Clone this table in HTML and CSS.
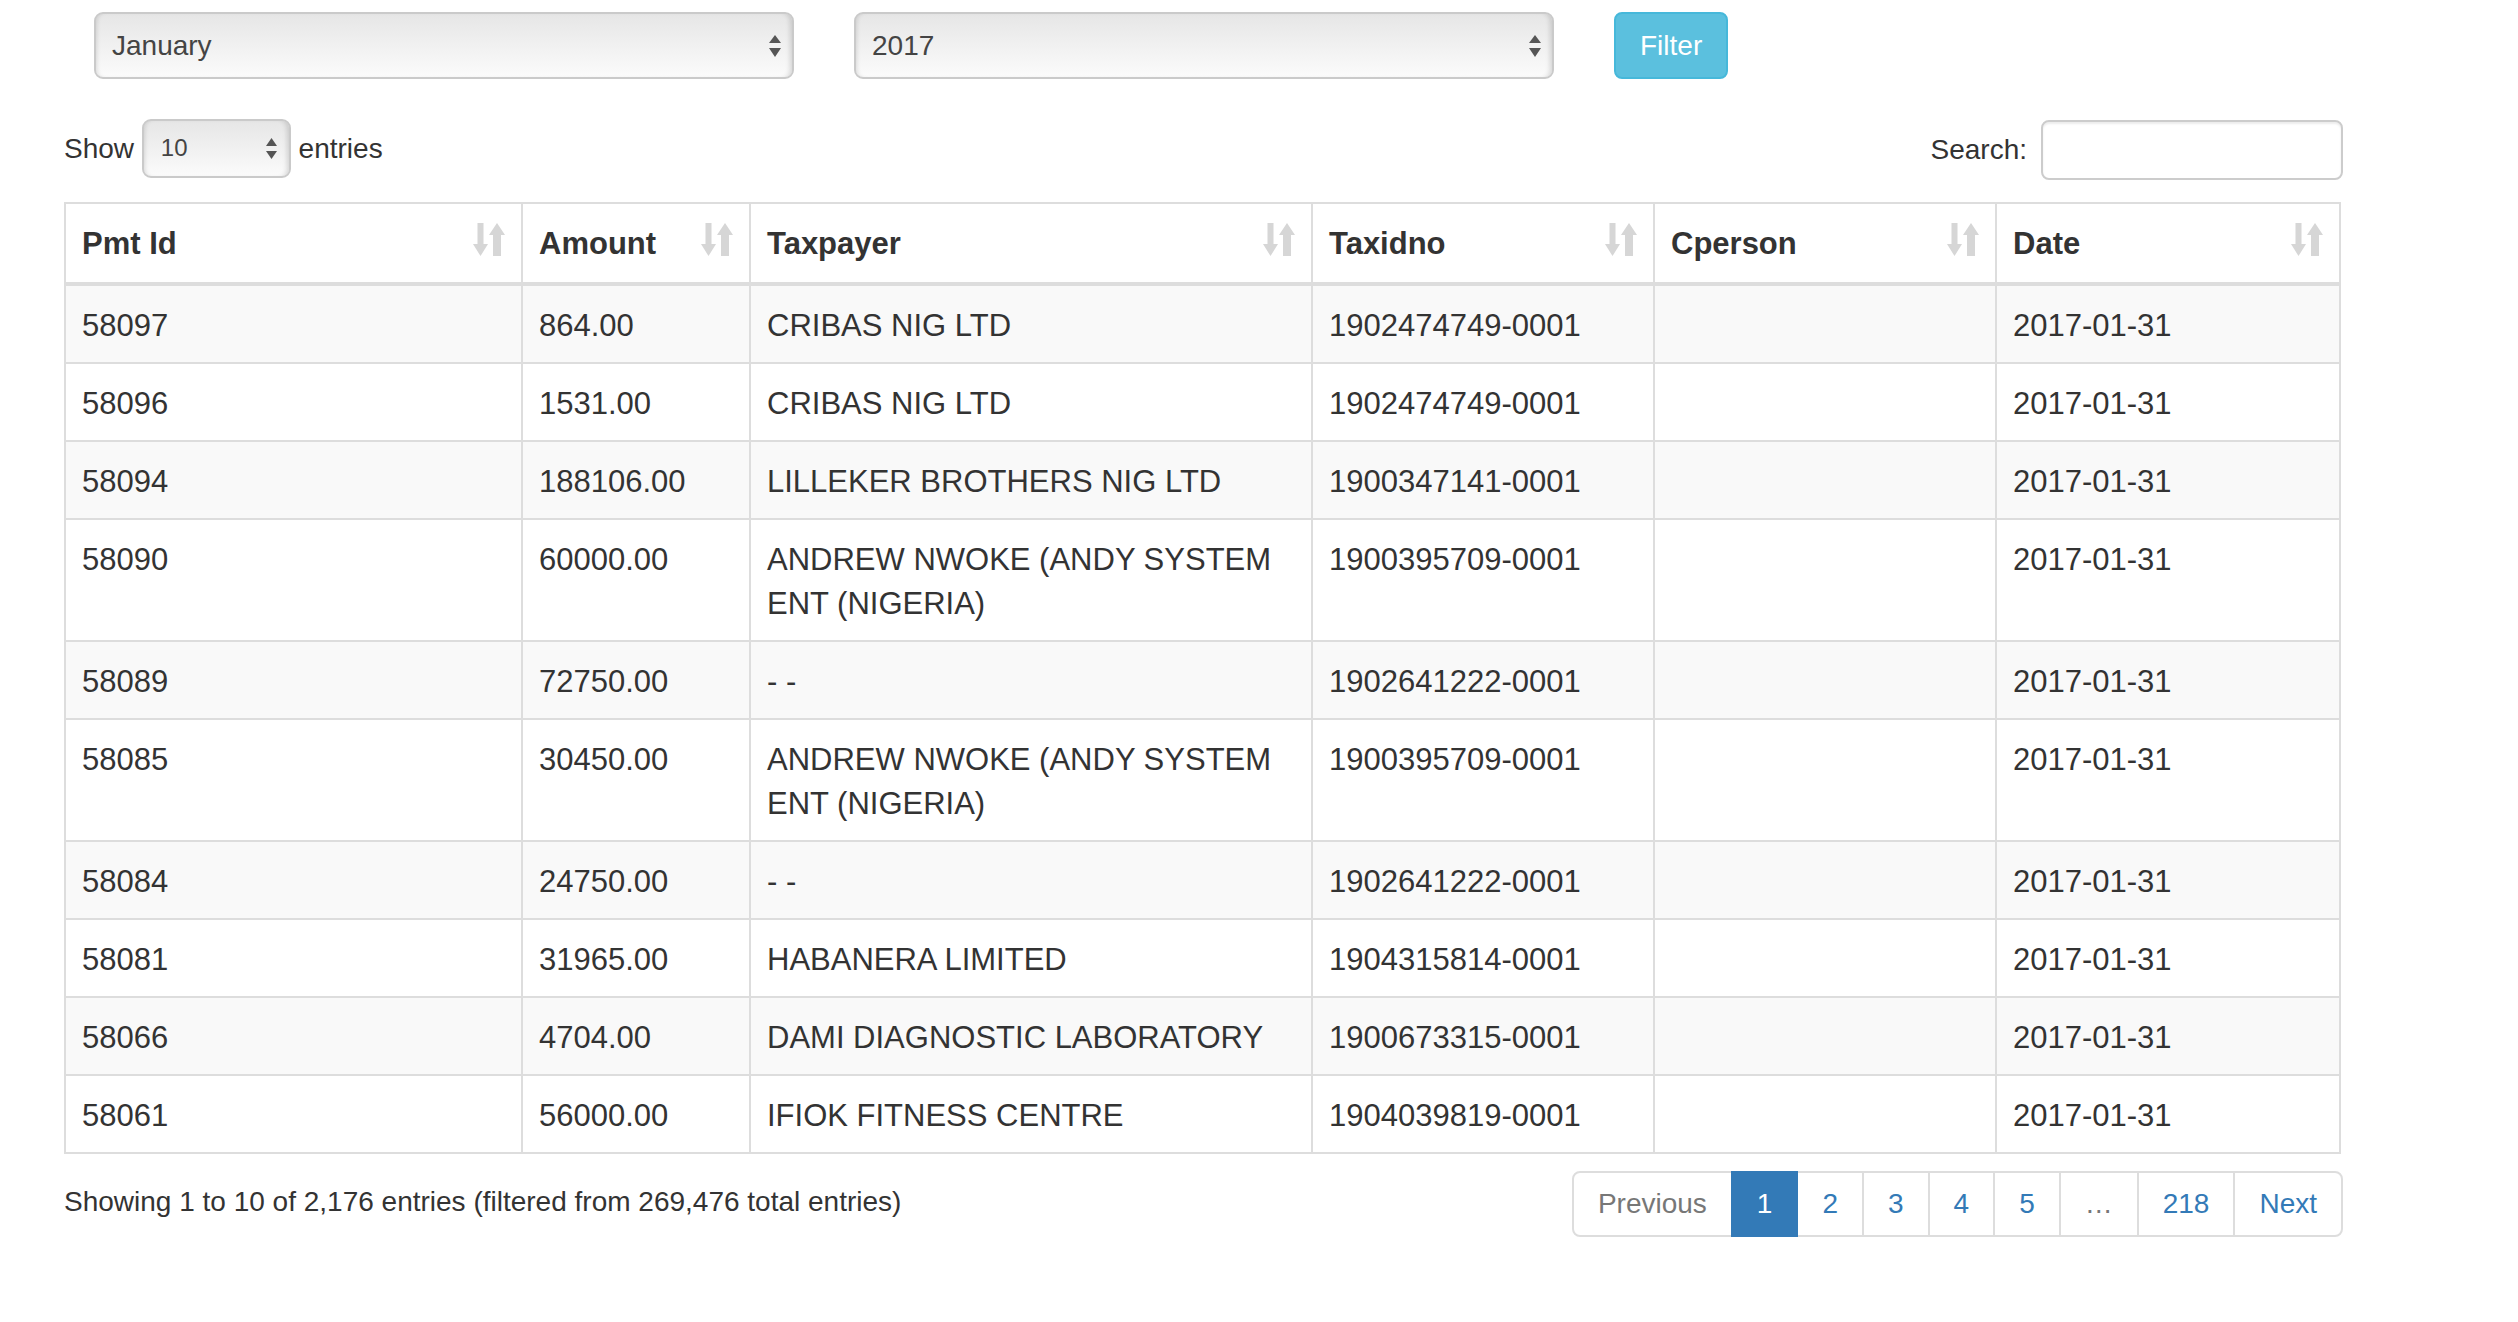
FILE: index.html
```html
<!DOCTYPE html>
<html lang="en">
<head>
<meta charset="utf-8">
<title>Payments</title>
<link rel="stylesheet" href="styles.css">
</head>
<body>
<div class="page">
  <div class="filters">
    <div class="select select-lg"><span>January</span>
      <svg class="updown" width="12" height="22" viewBox="0 0 12 22"><path d="M0 8 L12 8 L6 0 Z M0 13 L12 13 L6 22 Z" fill="#555"/></svg>
    </div>
    <div class="select select-lg"><span>2017</span>
      <svg class="updown" width="12" height="22" viewBox="0 0 12 22"><path d="M0 8 L12 8 L6 0 Z M0 13 L12 13 L6 22 Z" fill="#555"/></svg>
    </div>
    <button class="btn-filter" type="button">Filter</button>
  </div>

  <div class="dt-top">
    <div class="length">Show <div class="select select-sm"><span>10</span>
      <svg class="updown" width="11" height="21" viewBox="0 0 11 21"><path d="M0 8 L11 8 L5.5 0 Z M0 13 L11 13 L5.5 21 Z" fill="#555"/></svg>
    </div> entries</div>
    <label class="search">Search:<input class="search-input" type="search"></label>
  </div>

  <table class="dt">
    <thead>
      <tr>
        <th class="c1"><div class="th-in"><span>Pmt Id</span><svg class="sort" width="32" height="33" viewBox="0 0 32 33"><path d="M4.5 0 H10.5 V21 H15 L7.5 33 L0 21 H4.5 Z M20 33 H28 V12 H32 L24 0 L16 12 H20 Z" fill="#d6d6d6"/></svg></div></th>
        <th class="c2"><div class="th-in"><span>Amount</span><svg class="sort" width="32" height="33" viewBox="0 0 32 33"><path d="M4.5 0 H10.5 V21 H15 L7.5 33 L0 21 H4.5 Z M20 33 H28 V12 H32 L24 0 L16 12 H20 Z" fill="#d6d6d6"/></svg></div></th>
        <th class="c3"><div class="th-in"><span>Taxpayer</span><svg class="sort" width="32" height="33" viewBox="0 0 32 33"><path d="M4.5 0 H10.5 V21 H15 L7.5 33 L0 21 H4.5 Z M20 33 H28 V12 H32 L24 0 L16 12 H20 Z" fill="#d6d6d6"/></svg></div></th>
        <th class="c4"><div class="th-in"><span>Taxidno</span><svg class="sort" width="32" height="33" viewBox="0 0 32 33"><path d="M4.5 0 H10.5 V21 H15 L7.5 33 L0 21 H4.5 Z M20 33 H28 V12 H32 L24 0 L16 12 H20 Z" fill="#d6d6d6"/></svg></div></th>
        <th class="c5"><div class="th-in"><span>Cperson</span><svg class="sort" width="32" height="33" viewBox="0 0 32 33"><path d="M4.5 0 H10.5 V21 H15 L7.5 33 L0 21 H4.5 Z M20 33 H28 V12 H32 L24 0 L16 12 H20 Z" fill="#d6d6d6"/></svg></div></th>
        <th class="c6"><div class="th-in"><span>Date</span><svg class="sort" width="32" height="33" viewBox="0 0 32 33"><path d="M4.5 0 H10.5 V21 H15 L7.5 33 L0 21 H4.5 Z M20 33 H28 V12 H32 L24 0 L16 12 H20 Z" fill="#d6d6d6"/></svg></div></th>
      </tr>
    </thead>
    <tbody>
      <tr><td>58097</td><td>864.00</td><td>CRIBAS NIG LTD</td><td>1902474749-0001</td><td></td><td>2017-01-31</td></tr>
      <tr><td>58096</td><td>1531.00</td><td>CRIBAS NIG LTD</td><td>1902474749-0001</td><td></td><td>2017-01-31</td></tr>
      <tr><td>58094</td><td>188106.00</td><td>LILLEKER BROTHERS NIG LTD</td><td>1900347141-0001</td><td></td><td>2017-01-31</td></tr>
      <tr><td>58090</td><td>60000.00</td><td>ANDREW NWOKE (ANDY SYSTEM ENT (NIGERIA)</td><td>1900395709-0001</td><td></td><td>2017-01-31</td></tr>
      <tr><td>58089</td><td>72750.00</td><td>- -</td><td>1902641222-0001</td><td></td><td>2017-01-31</td></tr>
      <tr><td>58085</td><td>30450.00</td><td>ANDREW NWOKE (ANDY SYSTEM ENT (NIGERIA)</td><td>1900395709-0001</td><td></td><td>2017-01-31</td></tr>
      <tr><td>58084</td><td>24750.00</td><td>- -</td><td>1902641222-0001</td><td></td><td>2017-01-31</td></tr>
      <tr><td>58081</td><td>31965.00</td><td>HABANERA LIMITED</td><td>1904315814-0001</td><td></td><td>2017-01-31</td></tr>
      <tr><td>58066</td><td>4704.00</td><td>DAMI DIAGNOSTIC LABORATORY</td><td>1900673315-0001</td><td></td><td>2017-01-31</td></tr>
      <tr><td>58061</td><td>56000.00</td><td>IFIOK FITNESS CENTRE</td><td>1904039819-0001</td><td></td><td>2017-01-31</td></tr>
    </tbody>
  </table>

  <div class="dt-bottom">
    <div class="info">Showing 1 to 10 of 2,176 entries (filtered from 269,476 total entries)</div>
    <ul class="pagination">
      <li class="disabled first"><a href="#">Previous</a></li>
      <li class="active"><a href="#">1</a></li>
      <li><a href="#">2</a></li>
      <li><a href="#">3</a></li>
      <li><a href="#">4</a></li>
      <li><a href="#">5</a></li>
      <li class="disabled"><a href="#">…</a></li>
      <li><a href="#">218</a></li>
      <li class="last"><a href="#">Next</a></li>
    </ul>
  </div>
</div>
</body>
</html>
```

FILE: styles.css
```css
* { box-sizing: border-box; }

body {
  margin: 0;
  font-family: "Liberation Sans", Arial, sans-serif;
  font-size: 28px;
  line-height: 40px;
  color: #333;
  background: #fff;
}

.page {
  padding: 12px 175px 40px 64px;
}

.filters {
  display: flex;
  gap: 60px;
  margin-left: 30px;
}

.select {
  display: flex;
  align-items: center;
  justify-content: space-between;
  border: 2px solid #cacaca;
  border-radius: 9px;
  background: linear-gradient(#e6e6e6, #fbfbfb);
  box-shadow: inset 4px 0 4px -3px rgba(0, 0, 0, 0.12), inset -5px 0 5px -3px rgba(0, 0, 0, 0.14);
  color: #444;
}

.select-lg {
  width: 700px;
  height: 67px;
  padding: 0 11px 0 16px;
}

.select-sm {
  display: inline-flex;
  vertical-align: middle;
  width: 149px;
  height: 59px;
  padding: 0 12px 0 17px;
  font-size: 24px;
  margin-top: -4px;
}

.btn-filter {
  height: 67px;
  padding: 0 24px;
  border: 2px solid #46b8da;
  border-radius: 8px;
  background: #5bc0de;
  color: #fff;
  font-family: inherit;
  font-size: 28px;
}

.dt-top {
  display: flex;
  justify-content: space-between;
  align-items: center;
  height: 60px;
  margin-top: 41px;
}

.search {
  display: flex;
  align-items: center;
  gap: 14px;
  font-weight: normal;
}

.search-input {
  width: 302px;
  height: 60px;
  border: 2px solid #ccc;
  border-radius: 8px;
  box-shadow: inset 0 2px 2px rgba(0, 0, 0, 0.075);
  font-family: inherit;
  font-size: 24px;
  padding: 0 10px;
}

.dt {
  width: calc(100% - 3px);
  margin-top: 22px;
  border-collapse: collapse;
  table-layout: fixed;
  border: 2px solid #ddd;
  font-size: 31px;
  line-height: 44px;
}

.dt th,
.dt td {
  padding: 18px 16px 14px;
  border: 2px solid #ddd;
  text-align: left;
  vertical-align: top;
}

.dt thead th {
  padding: 18px 16px 16px;
  border-bottom-width: 4px;
  font-weight: bold;
}

.dt tbody tr:nth-child(odd) {
  background: #f9f9f9;
}

.c1 { width: 457px; }
.c2 { width: 228px; }
.c3 { width: 562px; }
.c4 { width: 342px; }
.c5 { width: 342px; }
.c6 { width: 344px; }

.th-in {
  display: flex;
  justify-content: space-between;
  align-items: flex-start;
}

.sort {
  margin-top: 1px;
  flex: none;
}

.dt-bottom {
  display: flex;
  justify-content: space-between;
  align-items: flex-start;
  margin-top: 17px;
}

.info {
  padding-top: 11px;
}

.pagination {
  display: flex;
  list-style: none;
  margin: 0;
  padding: 0;
}

.pagination a {
  display: block;
  padding: 11px 24px 11px 24px;
  line-height: 40px;
  border: 2px solid #ddd;
  margin-left: -2px;
  color: #337ab7;
  text-decoration: none;
  background: #fff;
}

.pagination .first a {
  margin-left: 0;
  border-radius: 8px 0 0 8px;
}

.pagination .last a {
  border-radius: 0 8px 8px 0;
}

.pagination .disabled a {
  color: #777;
}

.pagination .active a {
  position: relative;
  z-index: 2;
  background: #337ab7;
  border-color: #337ab7;
  color: #fff;
}
```
